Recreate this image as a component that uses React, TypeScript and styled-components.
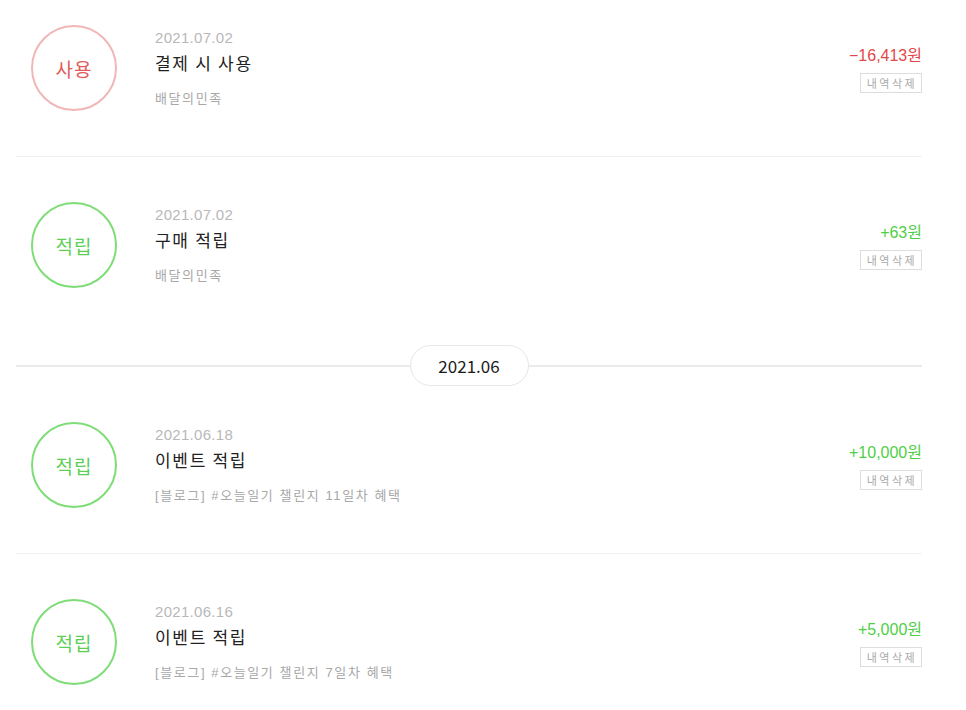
import styled, { createGlobalStyle } from "styled-components";

const GlobalStyle = createGlobalStyle`
  html, body {
    margin: 0;
    padding: 0;
    background: #ffffff;
    overflow: hidden;
  }
  body {
    font-family: "Liberation Sans", "Noto Sans CJK KR", sans-serif;
  }
`;

type Kind = "use" | "save";

type Item =
  | { type: "row"; kind: Kind; date: string; title: string; sub: string; amount: string; last?: boolean }
  | { type: "month"; label: string };

const items: Item[] = [
  { type: "row", kind: "use", date: "2021.07.02", title: "결제 시 사용", sub: "배달의민족", amount: "−16,413원" },
  { type: "row", kind: "save", date: "2021.07.02", title: "구매 적립", sub: "배달의민족", amount: "+63원", last: true },
  { type: "month", label: "2021.06" },
  { type: "row", kind: "save", date: "2021.06.18", title: "이벤트 적립", sub: "[블로그] #오늘일기 챌린지 11일차 혜택", amount: "+10,000원" },
  { type: "row", kind: "save", date: "2021.06.16", title: "이벤트 적립", sub: "[블로그] #오늘일기 챌린지 7일차 혜택", amount: "+5,000원" },
];

const colors = {
  use: { ring: "#f1b6b6", text: "#e25a5a" },
  save: { ring: "#7fdd78", text: "#5ccf55" },
};

function App() {
  let afterMonth = false;
  return (
    <>
      <GlobalStyle />
      <List>
        {items.map((item, i) => {
          if (item.type === "month") {
            afterMonth = true;
            return (
              <Month key={i}>
                <MonthPill>{item.label}</MonthPill>
              </Month>
            );
          }
          const tight = afterMonth;
          afterMonth = false;
          return <Row key={i} item={item} tight={tight} />;
        })}
      </List>
    </>
  );
}

type RowProps = {
  item: Extract<Item, { type: "row" }>;
  tight: boolean;
};

function Row({ item, tight }: RowProps) {
  const c = colors[item.kind];
  return (
    <RowStyle $noBorder={!!item.last} $tight={tight}>
      <Badge $ring={c.ring} $color={c.text}>
        {item.kind === "use" ? "사용" : "적립"}
      </Badge>
      <TextCol>
        <DateText>{item.date}</DateText>
        <Title>{item.title}</Title>
        <Sub>{item.sub}</Sub>
      </TextCol>
      <RightCol>
        <Amount $color={item.kind === "use" ? "#e24848" : "#4fcf45"}>{item.amount}</Amount>
        <DeleteButton>내역삭제</DeleteButton>
      </RightCol>
    </RowStyle>
  );
}

const List = styled.div`
  display: flex;
  flex-direction: column;
  width: 906px;
  margin: -20px 0 0 16px;
`;

const RowStyle = styled.div<{ $noBorder: boolean; $tight: boolean }>`
  display: flex;
  align-items: flex-start;
  padding: ${(p) => (p.$tight ? "36px" : "45px")} 0 45px 15px;
  border-bottom: ${(p) => (p.$noBorder ? "none" : "1px solid #f1f1f1")};
`;

const Badge = styled.div<{ $ring: string; $color: string }>`
  flex: none;
  box-sizing: border-box;
  width: 86px;
  height: 86px;
  border-radius: 50%;
  border: 2px solid ${(p) => p.$ring};
  display: flex;
  align-items: center;
  justify-content: center;
  color: ${(p) => p.$color};
  font-family: "Noto Sans CJK KR", sans-serif;
  font-size: 19px;
  letter-spacing: 1px;
`;

const TextCol = styled.div`
  flex: 1;
  display: flex;
  flex-direction: column;
  padding: 4px 0 0 38px;
`;

const DateText = styled.div`
  font-family: "Liberation Sans", sans-serif;
  font-size: 15px;
  letter-spacing: 0.3px;
  line-height: 18px;
  color: #b8b8b8;
`;

const Title = styled.div`
  margin-top: 4px;
  font-family: "Noto Sans CJK KR", sans-serif;
  font-size: 17px;
  letter-spacing: 1.7px;
  line-height: 24px;
  color: #222222;
`;

const Sub = styled.div`
  margin-top: 15px;
  font-family: "Liberation Sans", "Noto Sans CJK KR", sans-serif;
  font-size: 13px;
  letter-spacing: 1.6px;
  line-height: 18px;
  color: #a8a8a8;
`;

const RightCol = styled.div`
  display: flex;
  flex-direction: column;
  align-items: flex-end;
  padding-top: 21px;
`;

const Amount = styled.div<{ $color: string }>`
  font-family: "Liberation Sans", "Noto Sans CJK KR", sans-serif;
  font-size: 16px;
  line-height: 20px;
  color: ${(p) => p.$color};
`;

const DeleteButton = styled.button`
  margin-top: 7px;
  box-sizing: border-box;
  width: 62px;
  height: 20px;
  padding: 0 0 0 2px;
  border: 1px solid #dddddd;
  background: #ffffff;
  font-family: "Noto Sans CJK KR", sans-serif;
  font-size: 11px;
  letter-spacing: 2.5px;
  color: #aaaaaa;
  display: flex;
  align-items: center;
  justify-content: center;
`;

const Month = styled.div`
  position: relative;
  display: flex;
  justify-content: center;
  margin-top: 12px;
  &::before {
    content: "";
    position: absolute;
    left: 0;
    right: 0;
    top: 20px;
    height: 2px;
    background: #ebebeb;
  }
`;

const MonthPill = styled.div`
  position: relative;
  box-sizing: border-box;
  width: 119px;
  height: 41px;
  border: 1px solid #e6e6e6;
  border-radius: 21px;
  background: #ffffff;
  display: flex;
  align-items: center;
  justify-content: center;
  font-family: "Noto Sans CJK KR", sans-serif;
  font-size: 17px;
  font-weight: 400;
  color: #1a1a1a;
`;

export default App;
